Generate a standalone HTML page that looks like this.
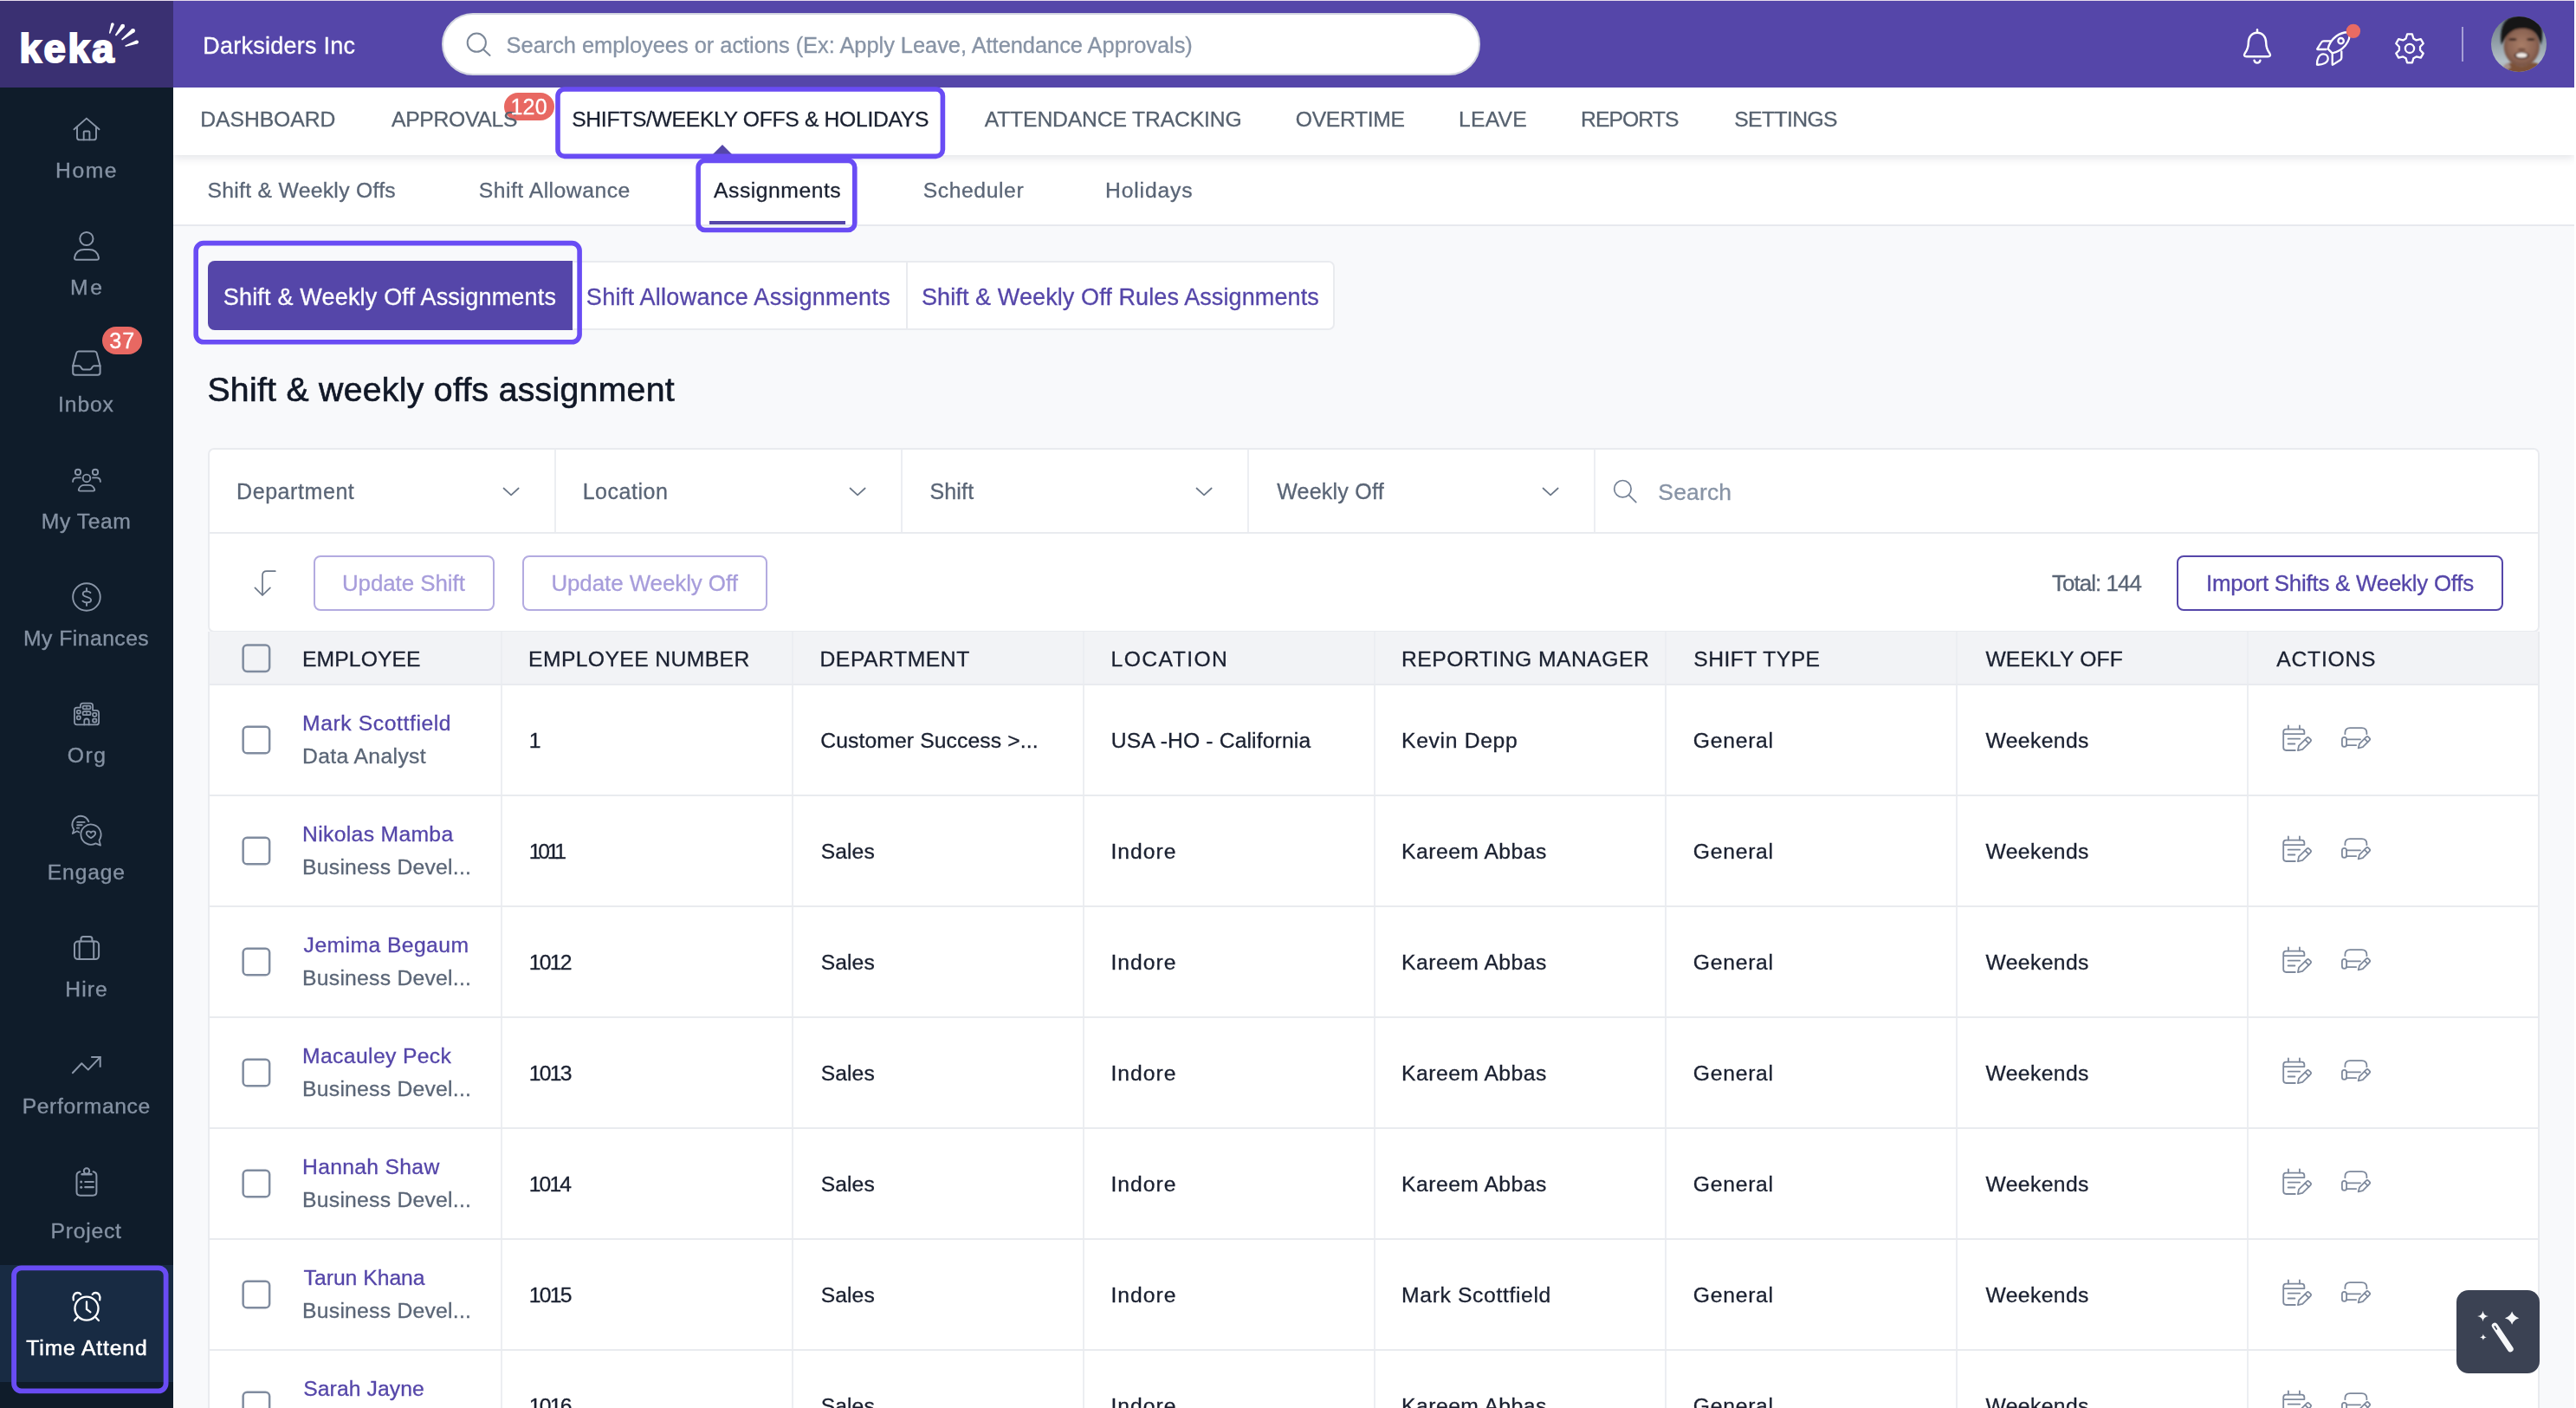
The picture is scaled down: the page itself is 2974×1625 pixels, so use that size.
<!DOCTYPE html>
<html lang="en">
<head>
<meta charset="utf-8">
<title>Keka - Shift &amp; weekly offs assignment</title>
<style>
*{box-sizing:border-box;margin:0;padding:0}
html,body{width:2974px;height:1625px;overflow:hidden;background:#fff}
body{position:relative;font-family:"Liberation Sans",Arial,sans-serif}
.a{position:absolute}
.t{position:absolute;white-space:nowrap;display:block;-webkit-text-stroke-width:0.3px}
#page{position:absolute;left:0;top:0;width:2974px;height:1625px;overflow:hidden;background:#f8f9fb}
.hl{position:absolute;border:5.6px solid #694cf4;border-radius:11px;z-index:20}
.cb{position:absolute;width:33px;height:33px;border:2.5px solid #808c9f;border-radius:6px}
.vline{position:absolute;width:2px;background:#eceef2}
.hline{position:absolute;height:2px;background:#e9ebef}
svg{position:absolute;overflow:visible}
</style>
</head>
<body>
<div id="page">
<!-- content background pieces -->
<div class="a" style="left:200px;top:179px;width:2772px;height:82px;background:#fff;border-bottom:2px solid #e7e9ee"></div>
<div class="a" style="left:200px;top:101px;width:2772px;height:78px;background:#fff;box-shadow:0 3px 10px rgba(30,40,70,.13);z-index:2"></div>
<!-- top bar -->
<div class="a" style="left:0;top:0;width:2974px;height:1px;background:#e6dcec;z-index:5"></div>
<div class="a" style="left:200px;top:1px;width:2772px;height:100px;background:#5546a9;z-index:3"></div>
<div class="a" style="left:0;top:1px;width:200px;height:100px;background:#3a3072;z-index:3"></div>
<div class="a" style="left:510px;top:15px;width:1199px;height:72px;border-radius:36px;background:#fff;border:2px solid #d3d6e0;z-index:4"></div>
<span class="t" style="left:22.6px;top:24.2px;z-index:6;font-size:45.5px;line-height:66px;font-weight:bold;color:#fff;letter-spacing:2.6px;-webkit-text-stroke:2.2px #fff;paint-order:stroke fill">keka</span>
<!-- sidebar -->
<div class="a" style="left:0;top:101px;width:200px;height:1524px;background:#0f1c2a;z-index:3"></div>
<div class="a" style="left:0;top:1460px;width:200px;height:135px;background:#182b43;z-index:3"></div>
<!-- right strip -->
<div class="a" style="left:2972px;top:0;width:2px;height:1625px;background:#fff;z-index:30"></div>

<!-- nav active triangle -->
<div class="a" style="left:822px;top:167px;width:0;height:0;border-left:12px solid transparent;border-right:12px solid transparent;border-bottom:12px solid #5546a9;z-index:6"></div>
<!-- subnav underline -->
<div class="a" style="left:819px;top:255px;width:157px;height:4px;background:#5546a9;z-index:6"></div>

<!-- tabs -->
<div class="a" style="left:240px;top:301px;width:1301px;height:80px;background:#fff;border:2px solid #e9ebef;border-radius:7px"></div>
<div class="a" style="left:240px;top:301px;width:421px;height:80px;background:#5546a9;border-radius:8px 0 0 8px"></div>
<div class="a" style="left:1046px;top:302px;width:2px;height:78px;background:#e9ebef"></div>

<!-- card -->
<div class="a" style="left:240px;top:517px;width:2692px;height:213px;background:#fff;border:2px solid #e9ebef;border-radius:7px"></div>
<div class="a" style="left:242px;top:614px;width:2688px;height:2px;background:#e9ebef"></div>
<div class="vline" style="left:640px;top:519px;height:95px"></div>
<div class="vline" style="left:1040px;top:519px;height:95px"></div>
<div class="vline" style="left:1440px;top:519px;height:95px"></div>
<div class="vline" style="left:1840px;top:519px;height:95px"></div>
<!-- buttons -->
<div class="a" style="left:362px;top:641px;width:209px;height:64px;border:2px solid #b3abe0;border-radius:8px"></div>
<div class="a" style="left:603px;top:641px;width:283px;height:64px;border:2px solid #b3abe0;border-radius:8px"></div>
<div class="a" style="left:2513px;top:641px;width:377px;height:64px;border:2px solid #5546a9;border-radius:8px"></div>

<!-- table -->
<div class="a" style="left:240px;top:729px;width:2692px;height:900px;background:#fff;border-left:2px solid #e9ebef;border-right:2px solid #e9ebef"></div>
<div class="a" style="left:242px;top:729px;width:2688px;height:61px;background:#f2f3f6"></div>
<div class="vline" style="left:577.5px;top:729px;height:900px"></div>
<div class="vline" style="left:913.5px;top:729px;height:900px"></div>
<div class="vline" style="left:1249.5px;top:729px;height:900px"></div>
<div class="vline" style="left:1585.5px;top:729px;height:900px"></div>
<div class="vline" style="left:1921.5px;top:729px;height:900px"></div>
<div class="vline" style="left:2257.5px;top:729px;height:900px"></div>
<div class="vline" style="left:2593.5px;top:729px;height:900px"></div>
<div class="hline" style="left:242px;top:789px;width:2688px"></div>
<div class="hline" style="left:242px;top:917px;width:2688px"></div>
<div class="hline" style="left:242px;top:1045px;width:2688px"></div>
<div class="hline" style="left:242px;top:1173px;width:2688px"></div>
<div class="hline" style="left:242px;top:1301px;width:2688px"></div>
<div class="hline" style="left:242px;top:1429px;width:2688px"></div>
<div class="hline" style="left:242px;top:1557px;width:2688px"></div>
<div class="hline" style="left:242px;top:1685px;width:2688px"></div>

<!-- floating button -->
<div class="a" style="left:2836px;top:1489px;width:96px;height:96px;border-radius:14px;background:#3b4253;z-index:10"></div>

<!-- highlights -->
<svg class="a" style="left:0;top:0;z-index:20" width="2974" height="1625" viewBox="0 0 2974 1625"><rect x="644.00" y="103.00" width="444.40" height="77.40" rx="7.80" fill="none" stroke="#694cf4" stroke-width="5.6"/><rect x="806.10" y="185.40" width="180.70" height="80.10" rx="7.80" fill="none" stroke="#694cf4" stroke-width="5.6"/><rect x="226.20" y="280.60" width="442.90" height="114.20" rx="8.70" fill="none" stroke="#694cf4" stroke-width="5.6"/><rect x="16.10" y="1463.40" width="175.50" height="142.00" rx="8.60" fill="none" stroke="#694cf4" stroke-width="5.8"/></svg>

<!-- badges -->
<div class="a" style="left:582px;top:107px;width:58px;height:32px;border-radius:16px;background:#e86862;z-index:7"></div>
<div class="a" style="left:118px;top:377px;width:46px;height:32px;border-radius:16px;background:#e86862;z-index:7"></div>

<svg class="a" style="left:0;top:0;z-index:9" width="2974" height="1625" viewBox="0 0 2974 1625"><rect x="280.65" y="744.45" width="30.5" height="30.5" rx="4.6" fill="none" stroke="#808c9f" stroke-width="2.5"/>
<rect x="280.65" y="838.75" width="30.5" height="30.5" rx="4.6" fill="none" stroke="#808c9f" stroke-width="2.5"/>
<rect x="280.65" y="966.75" width="30.5" height="30.5" rx="4.6" fill="none" stroke="#808c9f" stroke-width="2.5"/>
<rect x="280.65" y="1094.75" width="30.5" height="30.5" rx="4.6" fill="none" stroke="#808c9f" stroke-width="2.5"/>
<rect x="280.65" y="1222.75" width="30.5" height="30.5" rx="4.6" fill="none" stroke="#808c9f" stroke-width="2.5"/>
<rect x="280.65" y="1350.75" width="30.5" height="30.5" rx="4.6" fill="none" stroke="#808c9f" stroke-width="2.5"/>
<rect x="280.65" y="1478.75" width="30.5" height="30.5" rx="4.6" fill="none" stroke="#808c9f" stroke-width="2.5"/>
<rect x="280.65" y="1606.75" width="30.5" height="30.5" rx="4.6" fill="none" stroke="#808c9f" stroke-width="2.5"/>
<path d="M127.41,38.23 L131.61,28.55 L128.19,27.45 L125.99,37.77Z" fill="#fff"/><circle cx="126.7" cy="38.0" r="0.75" fill="#fff"/><circle cx="129.9" cy="28.0" r="1.8" fill="#fff"/>
<path d="M134.72,40.94 L143.64,31.38 L139.96,28.62 L133.28,39.86Z" fill="#fff"/><circle cx="134.0" cy="40.4" r="0.9" fill="#fff"/><circle cx="141.8" cy="30.0" r="2.3" fill="#fff"/>
<path d="M141.76,46.10 L155.11,37.27 L152.09,33.53 L140.64,44.70Z" fill="#fff"/><circle cx="141.2" cy="45.4" r="0.9" fill="#fff"/><circle cx="153.6" cy="35.4" r="2.4" fill="#fff"/>
<path d="M145.46,53.66 L158.65,50.39 L157.35,46.61 L144.94,52.14Z" fill="#fff"/><circle cx="145.2" cy="52.9" r="0.8" fill="#fff"/><circle cx="158.0" cy="48.5" r="2.0" fill="#fff"/>
<g fill="none" stroke="#8a96a8" stroke-width="1.9" stroke-linecap="round" stroke-linejoin="round" ><path d="M85.5,149.3 L99.9,136.6 L114.5,149.3"/><path d="M89,146.6 V158.4 Q89,161.4 92,161.4 H108 Q111,161.4 111,158.4 V146.6"/><path d="M96.7,161.4 V152.6 Q96.7,151.5 97.8,151.5 H102.3 Q103.4,151.5 103.4,152.6 V161.4"/></g>
<g fill="none" stroke="#8a96a8" stroke-width="2.0" stroke-linecap="round" stroke-linejoin="round" ><circle cx="99.9" cy="275.5" r="7.6"/><path d="M88.3,299.8 Q85.6,299.8 86.1,297.2 C87.3,291.6 91.5,288.1 97.2,288.1 H102.8 C108.5,288.1 112.7,291.6 113.9,297.2 Q114.4,299.8 111.7,299.8 Z"/></g>
<g fill="none" stroke="#8a96a8" stroke-width="2.0" stroke-linecap="round" stroke-linejoin="round" ><path d="M84.2,422.3 L88.3,407.3 Q88.9,405.4 90.9,405.4 H109 Q111,405.4 111.6,407.3 L115.6,422.3 V429.9 Q115.6,432.7 112.8,432.7 H87 Q84.2,432.7 84.2,429.9 Z"/><path d="M84.2,422.3 H91.4 Q92.5,422.3 93,423.3 L94.6,425.6 Q95.2,426.5 96.3,426.5 H103.7 Q104.8,426.5 105.3,425.6 L106.9,423.3 Q107.4,422.3 108.5,422.3 H115.6"/></g>
<g fill="none" stroke="#8a96a8" stroke-width="1.9" stroke-linecap="round" stroke-linejoin="round" ><circle cx="90" cy="544.9" r="3.15"/><circle cx="110" cy="544.9" r="3.15"/><circle cx="100" cy="551.9" r="4.3"/><path d="M84.1,555.9 C84.1,553 86,551.4 88.6,551.4 H92.9"/><path d="M115.9,555.9 C115.9,553 114,551.4 111.4,551.4 H107.1"/><path d="M92.4,566.6 Q90.4,566.6 90.9,564.8 C91.8,561.8 94.2,559.9 97.6,559.9 H102.4 C105.8,559.9 108.2,561.8 109.1,564.8 Q109.6,566.6 107.6,566.6 Z"/></g>
<g fill="none" stroke="#8a96a8" stroke-width="1.9" stroke-linecap="round" stroke-linejoin="round" ><circle cx="99.95" cy="689" r="15.8"/><path d="M100,679 V682.4 M100,695.5 V698.9"/><path d="M104.4,684 C103.4,683 101.8,682.4 100,682.4 C97.4,682.4 95.7,683.7 95.7,685.5 C95.7,687.4 97.2,688.1 100,688.9 C103.2,689.8 105.1,690.7 105.1,692.6 C105.1,694.4 103.2,695.5 100.2,695.5 C98.2,695.5 96.5,694.9 95.4,693.7"/></g>
<g fill="none" stroke="#8a96a8" stroke-width="1.8" stroke-linecap="round" stroke-linejoin="round" ><path d="M86,833.6 V819.4 Q86,816.6 88.8,816.6 H92.9 V814.5 Q92.9,811.7 95.7,811.7 H104.3 Q107.1,811.7 107.1,814.5 V819.8 H111.1 Q114.1,819.8 114.1,822.8 V833.4 Q114.1,836.4 111.1,836.4 H88.8 Q86,836.4 86,833.6 Z"/><rect x="95.6" y="814.6" width="8.90" height="3.80" rx="1.3"/><rect x="95.6" y="821.1" width="8.90" height="4.10" rx="1.3"/><rect x="88.8" y="819.8" width="4.00" height="3.70" rx="1.2"/><rect x="88.8" y="826.4" width="4.00" height="3.90" rx="1.2"/><rect x="107.1" y="822.9" width="4.30" height="3.90" rx="1.2"/><rect x="107.1" y="829.6" width="4.30" height="3.90" rx="1.2"/><path d="M97.3,836.4 V832.2 A2.7,2.7 0 0 1 102.7,832.2 V836.4"/><path d="M100,814.6 V818.4 M100,821.1 V825.2" stroke-width="1.2"/></g>
<g fill="none" stroke="#8a96a8" stroke-width="1.8" stroke-linecap="round" stroke-linejoin="round" ><path d="M110.45,973.34 A11.6,11.6 0 1 1 114.50,969.75 L116,975.6 Z"/><path d="M102.41,948.25 A9.8,9.8 0 1 0 85.37,957.50 L83.8,962 L88.9,959.3 L91.4,960.5"/><path d="M105,967.2 C101.5,965.3 99.8,963.6 99.8,961.8 C99.8,960.3 100.9,959.4 102.2,959.4 C103.4,959.4 104.4,960 105,961 C105.6,960 106.6,959.4 107.8,959.4 C109.1,959.4 110.2,960.3 110.2,961.8 C110.2,963.6 108.5,965.3 105,967.2 Z"/><path d="M89.2,948.9 H97.6 M89.2,952.3 H94.6 M88.8,955.6 H91.2" stroke-width="1.9"/></g>
<g fill="none" stroke="#8a96a8" stroke-width="2.0" stroke-linecap="round" stroke-linejoin="round" ><rect x="86" y="1086.6" width="28.10" height="20.50" rx="4"/><path d="M91.7,1086.6 V1107.1 M108.2,1086.6 V1107.1"/><path d="M93.5,1086.6 V1083.6 Q93.5,1081 96.1,1081 H103.8 Q106.4,1081 106.4,1083.6 V1086.6"/></g>
<g fill="none" stroke="#8a96a8" stroke-width="2.0" stroke-linecap="round" stroke-linejoin="round" ><path d="M83.9,1238.2 L94.3,1227.2 L101.8,1234.6 L115.6,1220.1"/><path d="M105.2,1220 H115.7 V1231.7" stroke-linejoin="miter" stroke-linecap="butt"/></g>
<g fill="none" stroke="#8a96a8" stroke-width="2.0" stroke-linecap="round" stroke-linejoin="round" ><path d="M92.4,1352.3 C90,1352.8 88.5,1354.4 88.5,1357 V1375.6 Q88.5,1379.8 92.7,1379.8 H107.2 Q111.4,1379.8 111.4,1375.6 V1357 C111.4,1354.4 109.9,1352.8 107.6,1352.3"/><circle cx="100" cy="1351.5" r="3.2"/><path d="M94.6,1355.2 H105.4" stroke-width="2.4"/><path d="M98.3,1364 H107.8 M98.3,1370.2 H107.8" stroke-width="2.2"/><circle cx="93.7" cy="1364" r="1.5" fill="#8a96a8" stroke="none"/><circle cx="93.7" cy="1370.2" r="1.5" fill="#8a96a8" stroke="none"/></g>
<g fill="none" stroke="#ffffff" stroke-width="2.3" stroke-linecap="round" stroke-linejoin="round" ><circle cx="100" cy="1510.1" r="13.5"/><path d="M100,1502.4 V1511 L104.4,1514.3" stroke-linejoin="miter"/><path d="M84.8,1500.2 C83.6,1496 86,1492 89.6,1492 C91.2,1492 92.4,1492.7 93.3,1493.9"/><path d="M115.2,1500.2 C116.4,1496 114,1492 110.4,1492 C108.8,1492 107.6,1492.7 106.7,1493.9"/><path d="M89.6,1520.2 L86.1,1524.1 M110.4,1520.2 L113.9,1524.1"/></g>
<g fill="none" stroke="#7b8798" stroke-width="2.0" stroke-linecap="round" stroke-linejoin="round" ><circle cx="550.3" cy="49.2" r="10.6"/><path d="M558,57 L565.6,63.9"/></g>
<g fill="none" stroke="#fff" stroke-width="2.4" stroke-linecap="round" stroke-linejoin="round" ><path d="M2606,34.3 V37.8"/><path d="M2606,37.8 C2599.4,37.8 2595.8,43 2595.8,49.3 C2595.8,54.8 2594.6,57.8 2591.7,61.6 C2590.2,63.8 2591,65.3 2593.6,65.3 H2618.4 C2621,65.3 2621.8,63.8 2620.3,61.6 C2617.4,57.8 2616.2,54.8 2616.2,49.3 C2616.2,43 2612.6,37.8 2606,37.8 Z"/><path d="M2602.5,69.6 C2603.3,73.7 2608.7,73.7 2609.5,69.6"/></g>
<g fill="none" stroke="#fff" stroke-width="2.3" stroke-linecap="round" stroke-linejoin="round" ><path d="M2712.6,37.4 C2701.5,36.2 2690.2,44.6 2687.6,56.4 L2692.6,61.4 C2704.8,58.6 2714,48.2 2712.6,37.4 Z"/><circle cx="2702.6" cy="47.2" r="3.2"/><path d="M2690.2,47.3 H2683 Q2681,47.3 2680,49 L2675.3,56.4 Q2674.9,57 2675.6,57 H2685.6"/><path d="M2703.3,59.4 V66.8 Q2703.3,68.4 2701.9,69.2 L2693.4,74.6 Q2692.7,75 2692.7,74.2 V62.6"/><path d="M2675,74.7 C2674.6,68.6 2677.4,62.3 2682.2,62.3 C2685.4,62.3 2687.7,64.6 2687.7,67.6 C2687.7,72.4 2681.6,75 2675,74.7 Z"/></g>
<circle cx="2716.9" cy="35.9" r="8.2" fill="#e96b63"/>
<g fill="none" stroke="#fff" stroke-width="2.3" stroke-linecap="round" stroke-linejoin="round" ><path d="M2777.63,44.51 L2779.10,39.45 L2784.90,39.45 L2786.37,44.51 L2789.68,46.42 L2794.79,45.17 L2797.69,50.19 L2794.05,53.99 L2794.05,57.81 L2797.69,61.61 L2794.79,66.63 L2789.68,65.38 L2786.37,67.29 L2784.90,72.35 L2779.10,72.35 L2777.63,67.29 L2774.32,65.38 L2769.21,66.63 L2766.31,61.61 L2769.95,57.81 L2769.95,53.99 L2766.31,50.19 L2769.21,45.17 L2774.32,46.42Z"/><circle cx="2782.0" cy="55.9" r="5.1"/></g>
<rect x="2842" y="31" width="2" height="40" fill="#a79fd6"/>
<defs><clipPath id="av"><circle cx="2908" cy="50.9" r="32"/></clipPath><filter id="bl" x="-20%" y="-20%" width="140%" height="140%"><feGaussianBlur stdDeviation="1.1"/></filter><linearGradient id="abg" x1="0" y1="0" x2="0" y2="1"><stop offset="0" stop-color="#66737c"/><stop offset="0.45" stop-color="#8f9da6"/><stop offset="0.75" stop-color="#b4bfc6"/><stop offset="1" stop-color="#a3adb3"/></linearGradient><radialGradient id="sk" cx="50%" cy="48%" r="58%"><stop offset="0" stop-color="#a97d67"/><stop offset="0.65" stop-color="#8d6554"/><stop offset="1" stop-color="#6c483b"/></radialGradient></defs><g clip-path="url(#av)"><rect x="2870" y="14" width="76" height="76" fill="url(#abg)"/><g filter="url(#bl)"><path d="M2888,52 C2886,38 2888,24 2900,20 C2908,17 2920,17.5 2927,22 C2935,27 2936,40 2933.5,52 C2931,44 2929,38 2922,35 C2914,33 2903,33 2897,38 C2892,42 2890,46 2888,52 Z" fill="#121315"/><ellipse cx="2911.3" cy="53.5" rx="20.6" ry="23" fill="url(#sk)"/><path d="M2889,50 C2886.5,36 2889,23 2900,19.5 C2908,16.5 2921,17 2928,22 C2935.5,27.5 2936,38 2934,49 C2931.5,41 2929,37 2922,34.5 C2914,31.5 2905,33 2900,36 C2894,40 2892,44 2889,50 Z" fill="#121315"/><ellipse cx="2901" cy="45.4" rx="4.6" ry="1.5" fill="#2b1c18" opacity=".85"/><ellipse cx="2921.8" cy="45.4" rx="4.6" ry="1.5" fill="#2b1c18" opacity=".85"/><ellipse cx="2911.3" cy="57" rx="4.5" ry="1.6" fill="#5d3c31" opacity=".7"/><ellipse cx="2911.3" cy="64" rx="8.6" ry="4.3" fill="#4d2e27"/><ellipse cx="2911.3" cy="63.8" rx="6.4" ry="2.8" fill="#f3ebe6"/><path d="M2890,90 L2892,76 Q2896,71 2901,73 Q2911,80 2922,73 Q2928,71 2932,75 L2936,90 Z" fill="#7b5138"/><path d="M2888,84 Q2890,73 2896,72.5 L2899,78 Z" fill="#a48f88"/></g></g>
<g fill="none" stroke="#6b7788" stroke-width="1.7" stroke-linecap="round" stroke-linejoin="round" ><path d="M581.5,563.5 L590.1,571.4 L598.7,563.5"/></g>
<g fill="none" stroke="#6b7788" stroke-width="1.7" stroke-linecap="round" stroke-linejoin="round" ><path d="M981.5,563.5 L990.1,571.4 L998.7,563.5"/></g>
<g fill="none" stroke="#6b7788" stroke-width="1.7" stroke-linecap="round" stroke-linejoin="round" ><path d="M1381.5,563.5 L1390.1,571.4 L1398.7,563.5"/></g>
<g fill="none" stroke="#6b7788" stroke-width="1.7" stroke-linecap="round" stroke-linejoin="round" ><path d="M1781.5,563.5 L1790.1,571.4 L1798.7,563.5"/></g>
<g fill="none" stroke="#6b7788" stroke-width="1.7" stroke-linecap="round" stroke-linejoin="round" ><path d="M317.8,659.2 H308 Q303,659.2 303,664.2 V686.5"/><path d="M294.4,678.3 L303,687 L311.9,678.3"/></g>
<g fill="none" stroke="#748195" stroke-width="1.7" stroke-linecap="round" stroke-linejoin="round" ><circle cx="1873.4" cy="564.2" r="9.7"/><path d="M1880.5,571.3 L1888.8,579.6"/></g>
<g transform="translate(0,0)"><g fill="none" stroke="#7e899c" stroke-width="1.8" stroke-linecap="round" stroke-linejoin="round" ><path d="M2641.9,837.4 V841.6 M2654.9,837.4 V841.6"/><path d="M2649.8,866 H2639.4 Q2636.2,866 2636.2,862.8 V844.9 Q2636.2,841.7 2639.4,841.7 H2657.2 Q2660.4,841.7 2660.4,844.9 V847.1 H2636.2"/><path d="M2641.6,852.7 H2655.2 M2641.6,858.5 H2649.4"/><g transform="translate(2652.9,866.1) rotate(-135)"><path d="M0,0 L-3.0,4.6 V17.599999999999998 Q-3.0,19.4 -1.2,19.4 H1.2 Q3.0,19.4 3.0,17.599999999999998 V4.6 Z"/><path d="M-3.0,14.799999999999999 H3.0"/></g><path d="M2707.4,847.2 V845.8 Q2707.4,840.1 2713.1,840.1 H2726.7 Q2732.4,840.1 2732.4,845.8 V847.2"/><rect x="2703.9" y="850.8" width="5.20" height="11.00" rx="2.6"/><path d="M2709.3,853.4 H2725 M2709.3,860.1 H2720.2"/><g transform="translate(2722.7,863.5) rotate(-135)"><path d="M0,0 L-2.7,4.6 V15.5 Q-2.7,17.3 -0.9000000000000001,17.3 H0.9000000000000001 Q2.7,17.3 2.7,15.5 V4.6 Z"/><path d="M-2.7,12.700000000000001 H2.7"/></g></g></g>
<g transform="translate(0,128)"><g fill="none" stroke="#7e899c" stroke-width="1.8" stroke-linecap="round" stroke-linejoin="round" ><path d="M2641.9,837.4 V841.6 M2654.9,837.4 V841.6"/><path d="M2649.8,866 H2639.4 Q2636.2,866 2636.2,862.8 V844.9 Q2636.2,841.7 2639.4,841.7 H2657.2 Q2660.4,841.7 2660.4,844.9 V847.1 H2636.2"/><path d="M2641.6,852.7 H2655.2 M2641.6,858.5 H2649.4"/><g transform="translate(2652.9,866.1) rotate(-135)"><path d="M0,0 L-3.0,4.6 V17.599999999999998 Q-3.0,19.4 -1.2,19.4 H1.2 Q3.0,19.4 3.0,17.599999999999998 V4.6 Z"/><path d="M-3.0,14.799999999999999 H3.0"/></g><path d="M2707.4,847.2 V845.8 Q2707.4,840.1 2713.1,840.1 H2726.7 Q2732.4,840.1 2732.4,845.8 V847.2"/><rect x="2703.9" y="850.8" width="5.20" height="11.00" rx="2.6"/><path d="M2709.3,853.4 H2725 M2709.3,860.1 H2720.2"/><g transform="translate(2722.7,863.5) rotate(-135)"><path d="M0,0 L-2.7,4.6 V15.5 Q-2.7,17.3 -0.9000000000000001,17.3 H0.9000000000000001 Q2.7,17.3 2.7,15.5 V4.6 Z"/><path d="M-2.7,12.700000000000001 H2.7"/></g></g></g>
<g transform="translate(0,256)"><g fill="none" stroke="#7e899c" stroke-width="1.8" stroke-linecap="round" stroke-linejoin="round" ><path d="M2641.9,837.4 V841.6 M2654.9,837.4 V841.6"/><path d="M2649.8,866 H2639.4 Q2636.2,866 2636.2,862.8 V844.9 Q2636.2,841.7 2639.4,841.7 H2657.2 Q2660.4,841.7 2660.4,844.9 V847.1 H2636.2"/><path d="M2641.6,852.7 H2655.2 M2641.6,858.5 H2649.4"/><g transform="translate(2652.9,866.1) rotate(-135)"><path d="M0,0 L-3.0,4.6 V17.599999999999998 Q-3.0,19.4 -1.2,19.4 H1.2 Q3.0,19.4 3.0,17.599999999999998 V4.6 Z"/><path d="M-3.0,14.799999999999999 H3.0"/></g><path d="M2707.4,847.2 V845.8 Q2707.4,840.1 2713.1,840.1 H2726.7 Q2732.4,840.1 2732.4,845.8 V847.2"/><rect x="2703.9" y="850.8" width="5.20" height="11.00" rx="2.6"/><path d="M2709.3,853.4 H2725 M2709.3,860.1 H2720.2"/><g transform="translate(2722.7,863.5) rotate(-135)"><path d="M0,0 L-2.7,4.6 V15.5 Q-2.7,17.3 -0.9000000000000001,17.3 H0.9000000000000001 Q2.7,17.3 2.7,15.5 V4.6 Z"/><path d="M-2.7,12.700000000000001 H2.7"/></g></g></g>
<g transform="translate(0,384)"><g fill="none" stroke="#7e899c" stroke-width="1.8" stroke-linecap="round" stroke-linejoin="round" ><path d="M2641.9,837.4 V841.6 M2654.9,837.4 V841.6"/><path d="M2649.8,866 H2639.4 Q2636.2,866 2636.2,862.8 V844.9 Q2636.2,841.7 2639.4,841.7 H2657.2 Q2660.4,841.7 2660.4,844.9 V847.1 H2636.2"/><path d="M2641.6,852.7 H2655.2 M2641.6,858.5 H2649.4"/><g transform="translate(2652.9,866.1) rotate(-135)"><path d="M0,0 L-3.0,4.6 V17.599999999999998 Q-3.0,19.4 -1.2,19.4 H1.2 Q3.0,19.4 3.0,17.599999999999998 V4.6 Z"/><path d="M-3.0,14.799999999999999 H3.0"/></g><path d="M2707.4,847.2 V845.8 Q2707.4,840.1 2713.1,840.1 H2726.7 Q2732.4,840.1 2732.4,845.8 V847.2"/><rect x="2703.9" y="850.8" width="5.20" height="11.00" rx="2.6"/><path d="M2709.3,853.4 H2725 M2709.3,860.1 H2720.2"/><g transform="translate(2722.7,863.5) rotate(-135)"><path d="M0,0 L-2.7,4.6 V15.5 Q-2.7,17.3 -0.9000000000000001,17.3 H0.9000000000000001 Q2.7,17.3 2.7,15.5 V4.6 Z"/><path d="M-2.7,12.700000000000001 H2.7"/></g></g></g>
<g transform="translate(0,512)"><g fill="none" stroke="#7e899c" stroke-width="1.8" stroke-linecap="round" stroke-linejoin="round" ><path d="M2641.9,837.4 V841.6 M2654.9,837.4 V841.6"/><path d="M2649.8,866 H2639.4 Q2636.2,866 2636.2,862.8 V844.9 Q2636.2,841.7 2639.4,841.7 H2657.2 Q2660.4,841.7 2660.4,844.9 V847.1 H2636.2"/><path d="M2641.6,852.7 H2655.2 M2641.6,858.5 H2649.4"/><g transform="translate(2652.9,866.1) rotate(-135)"><path d="M0,0 L-3.0,4.6 V17.599999999999998 Q-3.0,19.4 -1.2,19.4 H1.2 Q3.0,19.4 3.0,17.599999999999998 V4.6 Z"/><path d="M-3.0,14.799999999999999 H3.0"/></g><path d="M2707.4,847.2 V845.8 Q2707.4,840.1 2713.1,840.1 H2726.7 Q2732.4,840.1 2732.4,845.8 V847.2"/><rect x="2703.9" y="850.8" width="5.20" height="11.00" rx="2.6"/><path d="M2709.3,853.4 H2725 M2709.3,860.1 H2720.2"/><g transform="translate(2722.7,863.5) rotate(-135)"><path d="M0,0 L-2.7,4.6 V15.5 Q-2.7,17.3 -0.9000000000000001,17.3 H0.9000000000000001 Q2.7,17.3 2.7,15.5 V4.6 Z"/><path d="M-2.7,12.700000000000001 H2.7"/></g></g></g>
<g transform="translate(0,640)"><g fill="none" stroke="#7e899c" stroke-width="1.8" stroke-linecap="round" stroke-linejoin="round" ><path d="M2641.9,837.4 V841.6 M2654.9,837.4 V841.6"/><path d="M2649.8,866 H2639.4 Q2636.2,866 2636.2,862.8 V844.9 Q2636.2,841.7 2639.4,841.7 H2657.2 Q2660.4,841.7 2660.4,844.9 V847.1 H2636.2"/><path d="M2641.6,852.7 H2655.2 M2641.6,858.5 H2649.4"/><g transform="translate(2652.9,866.1) rotate(-135)"><path d="M0,0 L-3.0,4.6 V17.599999999999998 Q-3.0,19.4 -1.2,19.4 H1.2 Q3.0,19.4 3.0,17.599999999999998 V4.6 Z"/><path d="M-3.0,14.799999999999999 H3.0"/></g><path d="M2707.4,847.2 V845.8 Q2707.4,840.1 2713.1,840.1 H2726.7 Q2732.4,840.1 2732.4,845.8 V847.2"/><rect x="2703.9" y="850.8" width="5.20" height="11.00" rx="2.6"/><path d="M2709.3,853.4 H2725 M2709.3,860.1 H2720.2"/><g transform="translate(2722.7,863.5) rotate(-135)"><path d="M0,0 L-2.7,4.6 V15.5 Q-2.7,17.3 -0.9000000000000001,17.3 H0.9000000000000001 Q2.7,17.3 2.7,15.5 V4.6 Z"/><path d="M-2.7,12.700000000000001 H2.7"/></g></g></g>
<g transform="translate(0,768)"><g fill="none" stroke="#7e899c" stroke-width="1.8" stroke-linecap="round" stroke-linejoin="round" ><path d="M2641.9,837.4 V841.6 M2654.9,837.4 V841.6"/><path d="M2649.8,866 H2639.4 Q2636.2,866 2636.2,862.8 V844.9 Q2636.2,841.7 2639.4,841.7 H2657.2 Q2660.4,841.7 2660.4,844.9 V847.1 H2636.2"/><path d="M2641.6,852.7 H2655.2 M2641.6,858.5 H2649.4"/><g transform="translate(2652.9,866.1) rotate(-135)"><path d="M0,0 L-3.0,4.6 V17.599999999999998 Q-3.0,19.4 -1.2,19.4 H1.2 Q3.0,19.4 3.0,17.599999999999998 V4.6 Z"/><path d="M-3.0,14.799999999999999 H3.0"/></g><path d="M2707.4,847.2 V845.8 Q2707.4,840.1 2713.1,840.1 H2726.7 Q2732.4,840.1 2732.4,845.8 V847.2"/><rect x="2703.9" y="850.8" width="5.20" height="11.00" rx="2.6"/><path d="M2709.3,853.4 H2725 M2709.3,860.1 H2720.2"/><g transform="translate(2722.7,863.5) rotate(-135)"><path d="M0,0 L-2.7,4.6 V15.5 Q-2.7,17.3 -0.9000000000000001,17.3 H0.9000000000000001 Q2.7,17.3 2.7,15.5 V4.6 Z"/><path d="M-2.7,12.700000000000001 H2.7"/></g></g></g></svg>
<svg class="a" style="left:0;top:0;z-index:12" width="2974" height="1625" viewBox="0 0 2974 1625"><path d="M2880.2,1530 L2898.3,1557" stroke="#f6f7f9" stroke-width="6.8" stroke-linecap="round"/>
<path d="M2880.2,1530.8 L2882.3,1534" stroke="#3c4253" stroke-width="1.6" stroke-linecap="round"/>
<path d="M2900.1,1513.6000000000001 Q2901.904,1519.528 2908.2999999999997,1521.2 Q2901.904,1522.872 2900.1,1528.8 Q2898.296,1522.872 2891.9,1521.2 Q2898.296,1519.528 2900.1,1513.6000000000001Z" fill="#f6f7f9"/>
<path d="M2866.5,1512.7 Q2867.14,1518.37 2872.9,1519 Q2867.14,1519.63 2866.5,1525.3 Q2865.86,1519.63 2860.1,1519 Q2865.86,1518.37 2866.5,1512.7Z" fill="#f6f7f9"/>
<path d="M2866.9,1539.5 Q2867.3,1542.9199999999998 2870.9,1543.3 Q2867.3,1543.68 2866.9,1547.1 Q2866.5,1543.68 2862.9,1543.3 Q2866.5,1542.9199999999998 2866.9,1539.5Z" fill="#f6f7f9"/></svg>
<div id="texts" class="a" style="left:0;top:0;z-index:8;will-change:transform">
<span class="t" style="left:234.29px;top:36.00px;font-size:27.0px;line-height:34px;letter-spacing:0.237px;color:#ffffff;font-weight:normal;">Darksiders Inc</span>
<span class="t" style="left:584.61px;top:36.00px;font-size:25.4px;line-height:32px;letter-spacing:-0.015px;color:#8793a5;font-weight:normal;">Search employees or actions (Ex: Apply Leave, Attendance Approvals)</span>
<span class="t" style="left:231.27px;top:122.00px;font-size:24.7px;line-height:31px;letter-spacing:-0.047px;color:#56616f;font-weight:normal;">DASHBOARD</span>
<span class="t" style="left:452.00px;top:122.00px;font-size:24.7px;line-height:31px;letter-spacing:-0.283px;color:#56616f;font-weight:normal;">APPROVALS</span>
<span class="t" style="left:660.23px;top:122.00px;font-size:24.7px;line-height:31px;letter-spacing:-0.321px;color:#1a2030;font-weight:normal;">SHIFTS/WEEKLY OFFS &amp; HOLIDAYS</span>
<span class="t" style="left:1136.70px;top:122.00px;font-size:24.7px;line-height:31px;letter-spacing:-0.141px;color:#56616f;font-weight:normal;">ATTENDANCE TRACKING</span>
<span class="t" style="left:1495.84px;top:122.00px;font-size:24.7px;line-height:31px;letter-spacing:-0.337px;color:#56616f;font-weight:normal;">OVERTIME</span>
<span class="t" style="left:1684.07px;top:122.00px;font-size:24.7px;line-height:31px;letter-spacing:0.216px;color:#56616f;font-weight:normal;">LEAVE</span>
<span class="t" style="left:1825.07px;top:122.00px;font-size:24.7px;line-height:31px;letter-spacing:-0.914px;color:#56616f;font-weight:normal;">REPORTS</span>
<span class="t" style="left:2002.23px;top:122.00px;font-size:24.7px;line-height:31px;letter-spacing:-0.600px;color:#56616f;font-weight:normal;">SETTINGS</span>
<span class="t" style="left:239.53px;top:204.00px;font-size:24.7px;line-height:31px;letter-spacing:0.299px;color:#5a6576;font-weight:normal;">Shift &amp; Weekly Offs</span>
<span class="t" style="left:552.73px;top:204.00px;font-size:24.7px;line-height:31px;letter-spacing:0.507px;color:#5a6576;font-weight:normal;">Shift Allowance</span>
<span class="t" style="left:824.00px;top:204.00px;font-size:24.7px;line-height:31px;letter-spacing:0.537px;color:#1a2030;font-weight:normal;">Assignments</span>
<span class="t" style="left:1065.63px;top:204.00px;font-size:24.7px;line-height:31px;letter-spacing:0.609px;color:#5a6576;font-weight:normal;">Scheduler</span>
<span class="t" style="left:1276.07px;top:204.00px;font-size:24.7px;line-height:31px;letter-spacing:0.825px;color:#5a6576;font-weight:normal;">Holidays</span>
<span class="t" style="left:257.76px;top:326.00px;font-size:27.0px;line-height:34px;letter-spacing:0.191px;color:#ffffff;font-weight:normal;">Shift &amp; Weekly Off Assignments</span>
<span class="t" style="left:676.86px;top:326.00px;font-size:27.0px;line-height:34px;letter-spacing:0.274px;color:#5546a9;font-weight:normal;">Shift Allowance Assignments</span>
<span class="t" style="left:1063.96px;top:326.00px;font-size:27.0px;line-height:34px;letter-spacing:0.103px;color:#5546a9;font-weight:normal;">Shift &amp; Weekly Off Rules Assignments</span>
<span class="t" style="left:239.38px;top:426.00px;font-size:39.2px;line-height:47px;letter-spacing:0.296px;color:#111827;font-weight:normal;-webkit-text-stroke-width:0.65px;">Shift &amp; weekly offs assignment</span>
<span class="t" style="left:273.05px;top:551.00px;font-size:25.0px;line-height:32px;letter-spacing:0.572px;color:#5a6576;font-weight:normal;">Department</span>
<span class="t" style="left:672.65px;top:551.00px;font-size:25.0px;line-height:32px;letter-spacing:0.534px;color:#5a6576;font-weight:normal;">Location</span>
<span class="t" style="left:1073.42px;top:551.00px;font-size:25.0px;line-height:32px;letter-spacing:0.168px;color:#5a6576;font-weight:normal;">Shift</span>
<span class="t" style="left:1474.20px;top:551.00px;font-size:25.0px;line-height:32px;letter-spacing:0.231px;color:#5a6576;font-weight:normal;">Weekly Off</span>
<span class="t" style="left:1914.37px;top:551.00px;font-size:26.5px;line-height:34px;letter-spacing:0.150px;color:#8793a5;font-weight:normal;">Search</span>
<span class="t" style="left:394.88px;top:657.00px;font-size:25.9px;line-height:32px;letter-spacing:-0.046px;color:#a79ddb;font-weight:normal;">Update Shift</span>
<span class="t" style="left:636.38px;top:657.00px;font-size:25.9px;line-height:32px;letter-spacing:-0.056px;color:#a79ddb;font-weight:normal;">Update Weekly Off</span>
<span class="t" style="left:2368.90px;top:657.00px;font-size:25.9px;line-height:32px;letter-spacing:-0.907px;color:#5a6576;font-weight:normal;">Total: 144</span>
<span class="t" style="left:2546.98px;top:657.00px;font-size:25.9px;line-height:32px;letter-spacing:-0.245px;color:#5546a9;font-weight:normal;">Import Shifts &amp; Weekly Offs</span>
<span class="t" style="left:349.07px;top:745.00px;font-size:24.7px;line-height:31px;letter-spacing:0.096px;color:#1a2030;font-weight:normal;">EMPLOYEE</span>
<span class="t" style="left:610.07px;top:745.00px;font-size:24.7px;line-height:31px;letter-spacing:0.392px;color:#1a2030;font-weight:normal;">EMPLOYEE NUMBER</span>
<span class="t" style="left:946.47px;top:745.00px;font-size:24.7px;line-height:31px;letter-spacing:0.563px;color:#1a2030;font-weight:normal;">DEPARTMENT</span>
<span class="t" style="left:1282.47px;top:745.00px;font-size:24.7px;line-height:31px;letter-spacing:1.445px;color:#1a2030;font-weight:normal;">LOCATION</span>
<span class="t" style="left:1618.07px;top:745.00px;font-size:24.7px;line-height:31px;letter-spacing:0.478px;color:#1a2030;font-weight:normal;">REPORTING MANAGER</span>
<span class="t" style="left:1955.23px;top:745.00px;font-size:24.7px;line-height:31px;letter-spacing:0.454px;color:#1a2030;font-weight:normal;">SHIFT TYPE</span>
<span class="t" style="left:2292.40px;top:745.00px;font-size:24.7px;line-height:31px;letter-spacing:0.182px;color:#1a2030;font-weight:normal;">WEEKLY OFF</span>
<span class="t" style="left:2628.30px;top:745.00px;font-size:24.7px;line-height:31px;letter-spacing:0.758px;color:#1a2030;font-weight:normal;">ACTIONS</span>
<span class="t" style="left:349.07px;top:819.00px;font-size:24.7px;line-height:31px;letter-spacing:0.591px;color:#5546a9;font-weight:normal;">Mark Scottfield</span>
<span class="t" style="left:349.07px;top:857.00px;font-size:24.7px;line-height:31px;letter-spacing:0.365px;color:#5a6576;font-weight:normal;">Data Analyst</span>
<span class="t" style="left:610.76px;top:839.00px;font-size:24.7px;line-height:31px;letter-spacing:0.000px;color:#1a2030;font-weight:normal;">1</span>
<span class="t" style="left:947.24px;top:839.00px;font-size:24.7px;line-height:31px;letter-spacing:0.117px;color:#1a2030;font-weight:normal;">Customer Success &gt;...</span>
<span class="t" style="left:1282.86px;top:839.00px;font-size:24.7px;line-height:31px;letter-spacing:0.136px;color:#1a2030;font-weight:normal;">USA -HO - California</span>
<span class="t" style="left:1618.07px;top:839.00px;font-size:24.7px;line-height:31px;letter-spacing:0.670px;color:#1a2030;font-weight:normal;">Kevin Depp</span>
<span class="t" style="left:1954.84px;top:839.00px;font-size:24.7px;line-height:31px;letter-spacing:0.735px;color:#1a2030;font-weight:normal;">General</span>
<span class="t" style="left:2292.40px;top:839.00px;font-size:24.7px;line-height:31px;letter-spacing:0.403px;color:#1a2030;font-weight:normal;">Weekends</span>
<span class="t" style="left:349.07px;top:947.00px;font-size:24.7px;line-height:31px;letter-spacing:0.330px;color:#5546a9;font-weight:normal;">Nikolas Mamba</span>
<span class="t" style="left:349.07px;top:985.00px;font-size:24.7px;line-height:31px;letter-spacing:0.259px;color:#5a6576;font-weight:normal;">Business Devel...</span>
<span class="t" style="left:610.76px;top:967.00px;font-size:24.7px;line-height:31px;letter-spacing:-3.290px;color:#1a2030;font-weight:normal;">1011</span>
<span class="t" style="left:947.63px;top:967.00px;font-size:24.7px;line-height:31px;letter-spacing:0.089px;color:#1a2030;font-weight:normal;">Sales</span>
<span class="t" style="left:1282.47px;top:967.00px;font-size:24.7px;line-height:31px;letter-spacing:1.019px;color:#1a2030;font-weight:normal;">Indore</span>
<span class="t" style="left:1618.07px;top:967.00px;font-size:24.7px;line-height:31px;letter-spacing:0.483px;color:#1a2030;font-weight:normal;">Kareem Abbas</span>
<span class="t" style="left:1954.84px;top:967.00px;font-size:24.7px;line-height:31px;letter-spacing:0.735px;color:#1a2030;font-weight:normal;">General</span>
<span class="t" style="left:2292.40px;top:967.00px;font-size:24.7px;line-height:31px;letter-spacing:0.403px;color:#1a2030;font-weight:normal;">Weekends</span>
<span class="t" style="left:350.61px;top:1075.00px;font-size:24.7px;line-height:31px;letter-spacing:0.428px;color:#5546a9;font-weight:normal;">Jemima Begaum</span>
<span class="t" style="left:349.07px;top:1113.00px;font-size:24.7px;line-height:31px;letter-spacing:0.259px;color:#5a6576;font-weight:normal;">Business Devel...</span>
<span class="t" style="left:610.76px;top:1095.00px;font-size:24.7px;line-height:31px;letter-spacing:-1.734px;color:#1a2030;font-weight:normal;">1012</span>
<span class="t" style="left:947.63px;top:1095.00px;font-size:24.7px;line-height:31px;letter-spacing:0.089px;color:#1a2030;font-weight:normal;">Sales</span>
<span class="t" style="left:1282.47px;top:1095.00px;font-size:24.7px;line-height:31px;letter-spacing:1.019px;color:#1a2030;font-weight:normal;">Indore</span>
<span class="t" style="left:1618.07px;top:1095.00px;font-size:24.7px;line-height:31px;letter-spacing:0.483px;color:#1a2030;font-weight:normal;">Kareem Abbas</span>
<span class="t" style="left:1954.84px;top:1095.00px;font-size:24.7px;line-height:31px;letter-spacing:0.735px;color:#1a2030;font-weight:normal;">General</span>
<span class="t" style="left:2292.40px;top:1095.00px;font-size:24.7px;line-height:31px;letter-spacing:0.403px;color:#1a2030;font-weight:normal;">Weekends</span>
<span class="t" style="left:349.07px;top:1203.00px;font-size:24.7px;line-height:31px;letter-spacing:0.372px;color:#5546a9;font-weight:normal;">Macauley Peck</span>
<span class="t" style="left:349.07px;top:1241.00px;font-size:24.7px;line-height:31px;letter-spacing:0.259px;color:#5a6576;font-weight:normal;">Business Devel...</span>
<span class="t" style="left:610.76px;top:1223.00px;font-size:24.7px;line-height:31px;letter-spacing:-1.734px;color:#1a2030;font-weight:normal;">1013</span>
<span class="t" style="left:947.63px;top:1223.00px;font-size:24.7px;line-height:31px;letter-spacing:0.089px;color:#1a2030;font-weight:normal;">Sales</span>
<span class="t" style="left:1282.47px;top:1223.00px;font-size:24.7px;line-height:31px;letter-spacing:1.019px;color:#1a2030;font-weight:normal;">Indore</span>
<span class="t" style="left:1618.07px;top:1223.00px;font-size:24.7px;line-height:31px;letter-spacing:0.483px;color:#1a2030;font-weight:normal;">Kareem Abbas</span>
<span class="t" style="left:1954.84px;top:1223.00px;font-size:24.7px;line-height:31px;letter-spacing:0.735px;color:#1a2030;font-weight:normal;">General</span>
<span class="t" style="left:2292.40px;top:1223.00px;font-size:24.7px;line-height:31px;letter-spacing:0.403px;color:#1a2030;font-weight:normal;">Weekends</span>
<span class="t" style="left:349.07px;top:1331.00px;font-size:24.7px;line-height:31px;letter-spacing:0.306px;color:#5546a9;font-weight:normal;">Hannah Shaw</span>
<span class="t" style="left:349.07px;top:1369.00px;font-size:24.7px;line-height:31px;letter-spacing:0.259px;color:#5a6576;font-weight:normal;">Business Devel...</span>
<span class="t" style="left:610.76px;top:1351.00px;font-size:24.7px;line-height:31px;letter-spacing:-1.863px;color:#1a2030;font-weight:normal;">1014</span>
<span class="t" style="left:947.63px;top:1351.00px;font-size:24.7px;line-height:31px;letter-spacing:0.089px;color:#1a2030;font-weight:normal;">Sales</span>
<span class="t" style="left:1282.47px;top:1351.00px;font-size:24.7px;line-height:31px;letter-spacing:1.019px;color:#1a2030;font-weight:normal;">Indore</span>
<span class="t" style="left:1618.07px;top:1351.00px;font-size:24.7px;line-height:31px;letter-spacing:0.483px;color:#1a2030;font-weight:normal;">Kareem Abbas</span>
<span class="t" style="left:1954.84px;top:1351.00px;font-size:24.7px;line-height:31px;letter-spacing:0.735px;color:#1a2030;font-weight:normal;">General</span>
<span class="t" style="left:2292.40px;top:1351.00px;font-size:24.7px;line-height:31px;letter-spacing:0.403px;color:#1a2030;font-weight:normal;">Weekends</span>
<span class="t" style="left:350.61px;top:1459.00px;font-size:24.7px;line-height:31px;letter-spacing:-0.004px;color:#5546a9;font-weight:normal;">Tarun Khana</span>
<span class="t" style="left:349.07px;top:1497.00px;font-size:24.7px;line-height:31px;letter-spacing:0.259px;color:#5a6576;font-weight:normal;">Business Devel...</span>
<span class="t" style="left:610.76px;top:1479.00px;font-size:24.7px;line-height:31px;letter-spacing:-1.734px;color:#1a2030;font-weight:normal;">1015</span>
<span class="t" style="left:947.63px;top:1479.00px;font-size:24.7px;line-height:31px;letter-spacing:0.089px;color:#1a2030;font-weight:normal;">Sales</span>
<span class="t" style="left:1282.47px;top:1479.00px;font-size:24.7px;line-height:31px;letter-spacing:1.019px;color:#1a2030;font-weight:normal;">Indore</span>
<span class="t" style="left:1618.07px;top:1479.00px;font-size:24.7px;line-height:31px;letter-spacing:0.641px;color:#1a2030;font-weight:normal;">Mark Scottfield</span>
<span class="t" style="left:1954.84px;top:1479.00px;font-size:24.7px;line-height:31px;letter-spacing:0.735px;color:#1a2030;font-weight:normal;">General</span>
<span class="t" style="left:2292.40px;top:1479.00px;font-size:24.7px;line-height:31px;letter-spacing:0.403px;color:#1a2030;font-weight:normal;">Weekends</span>
<span class="t" style="left:350.23px;top:1587.00px;font-size:24.7px;line-height:31px;letter-spacing:0.089px;color:#5546a9;font-weight:normal;">Sarah Jayne</span>
<span class="t" style="left:349.07px;top:1625.00px;font-size:24.7px;line-height:31px;letter-spacing:0.259px;color:#5a6576;font-weight:normal;">Business Devel...</span>
<span class="t" style="left:610.76px;top:1607.00px;font-size:24.7px;line-height:31px;letter-spacing:-1.734px;color:#1a2030;font-weight:normal;">1016</span>
<span class="t" style="left:947.63px;top:1607.00px;font-size:24.7px;line-height:31px;letter-spacing:0.089px;color:#1a2030;font-weight:normal;">Sales</span>
<span class="t" style="left:1282.47px;top:1607.00px;font-size:24.7px;line-height:31px;letter-spacing:1.019px;color:#1a2030;font-weight:normal;">Indore</span>
<span class="t" style="left:1618.07px;top:1607.00px;font-size:24.7px;line-height:31px;letter-spacing:0.483px;color:#1a2030;font-weight:normal;">Kareem Abbas</span>
<span class="t" style="left:1954.84px;top:1607.00px;font-size:24.7px;line-height:31px;letter-spacing:0.735px;color:#1a2030;font-weight:normal;">General</span>
<span class="t" style="left:2292.40px;top:1607.00px;font-size:24.7px;line-height:31px;letter-spacing:0.403px;color:#1a2030;font-weight:normal;">Weekends</span>
<span class="t" style="left:64.07px;top:181.00px;font-size:24.7px;line-height:31px;letter-spacing:1.515px;color:#8592a3;font-weight:normal;-webkit-text-stroke-width:0.35px;">Home</span>
<span class="t" style="left:81.07px;top:316.00px;font-size:24.7px;line-height:31px;letter-spacing:2.618px;color:#8592a3;font-weight:normal;-webkit-text-stroke-width:0.35px;">Me</span>
<span class="t" style="left:67.07px;top:451.00px;font-size:24.7px;line-height:31px;letter-spacing:0.877px;color:#8592a3;font-weight:normal;-webkit-text-stroke-width:0.35px;">Inbox</span>
<span class="t" style="left:47.77px;top:586.00px;font-size:24.7px;line-height:31px;letter-spacing:0.554px;color:#8592a3;font-weight:normal;-webkit-text-stroke-width:0.35px;">My Team</span>
<span class="t" style="left:27.07px;top:721.00px;font-size:24.7px;line-height:31px;letter-spacing:0.469px;color:#8592a3;font-weight:normal;-webkit-text-stroke-width:0.35px;">My Finances</span>
<span class="t" style="left:77.84px;top:856.00px;font-size:24.7px;line-height:31px;letter-spacing:1.535px;color:#8592a3;font-weight:normal;-webkit-text-stroke-width:0.35px;">Org</span>
<span class="t" style="left:54.87px;top:991.00px;font-size:24.7px;line-height:31px;letter-spacing:0.794px;color:#8592a3;font-weight:normal;-webkit-text-stroke-width:0.35px;">Engage</span>
<span class="t" style="left:75.37px;top:1126.00px;font-size:24.7px;line-height:31px;letter-spacing:1.014px;color:#8592a3;font-weight:normal;-webkit-text-stroke-width:0.35px;">Hire</span>
<span class="t" style="left:25.67px;top:1261.00px;font-size:24.7px;line-height:31px;letter-spacing:0.633px;color:#8592a3;font-weight:normal;-webkit-text-stroke-width:0.35px;">Performance</span>
<span class="t" style="left:58.57px;top:1405.00px;font-size:24.7px;line-height:31px;letter-spacing:0.745px;color:#8592a3;font-weight:normal;-webkit-text-stroke-width:0.35px;">Project</span>
<span class="t" style="left:30.31px;top:1540.00px;font-size:24.7px;line-height:31px;letter-spacing:0.853px;color:#ffffff;font-weight:normal;-webkit-text-stroke-width:0.55px;">Time Attend</span>
<span class="t" style="left:589.44px;top:107.00px;font-size:25.0px;line-height:32px;letter-spacing:0.237px;color:#ffffff;font-weight:normal;">120</span>
<span class="t" style="left:126.21px;top:377.00px;font-size:25.2px;line-height:32px;letter-spacing:0.979px;color:#ffffff;font-weight:normal;">37</span>
</div>
</div>
</body>
</html>
